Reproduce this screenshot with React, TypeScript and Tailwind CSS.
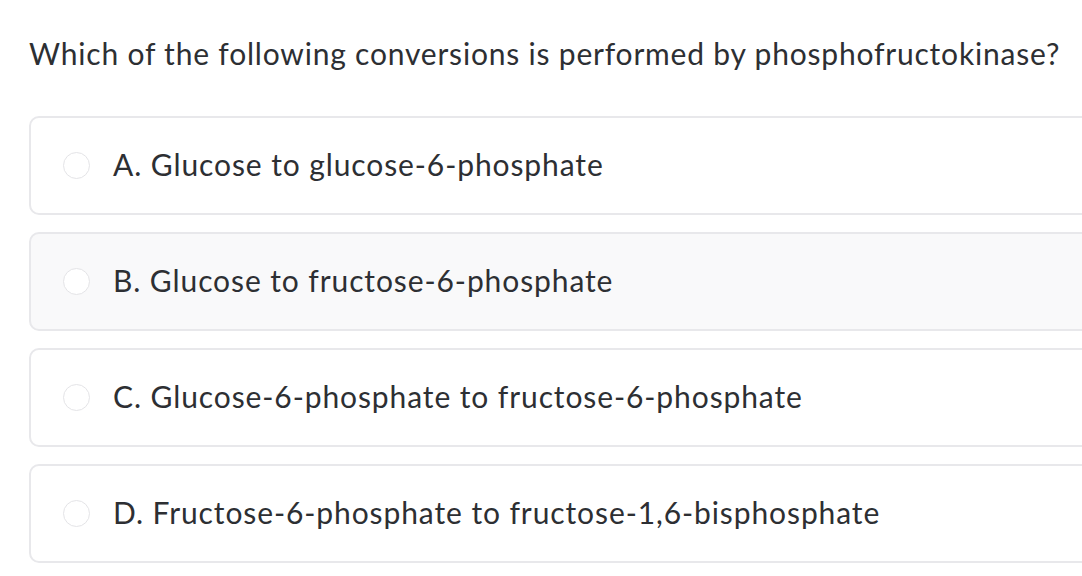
const options = [
  { label: "A. Glucose to glucose-6-phosphate", hover: false },
  { label: "B. Glucose to fructose-6-phosphate", hover: true },
  { label: "C. Glucose-6-phosphate to fructose-6-phosphate", hover: false },
  { label: "D. Fructose-6-phosphate to fructose-1,6-bisphosphate", hover: false },
]

export default function App() {
  return (
    <div
      className="w-[1082px] h-[576px] overflow-hidden bg-white text-[#2d2f33]"
      style={{ fontFamily: "Lato, 'Noto Sans', sans-serif" }}
    >
      <h1 className="pl-[29px] pt-[33px] h-[116px] text-[30px] leading-[40px] tracking-[0.8px] font-normal">
        Which of the following conversions is performed by phosphofructokinase?
      </h1>
      <div className="flex flex-col gap-[17px] pl-[29px]">
        {options.map((o) => (
          <div
            key={o.label}
            className={`w-[1100px] h-[99px] flex items-center border-2 border-[#e8e8eb] rounded-[10px] ${
              o.hover ? "bg-[#f9f9fa]" : "bg-white"
            }`}
          >
            <div className="ml-[32px] w-[27px] h-[27px] rounded-full border-[1.5px] border-[#e4e4e7] bg-white shrink-0" />
            <span className="ml-[23px] -mt-[3px] text-[30px] leading-[40px] tracking-[0.9px]">{o.label}</span>
          </div>
        ))}
      </div>
    </div>
  )
}
